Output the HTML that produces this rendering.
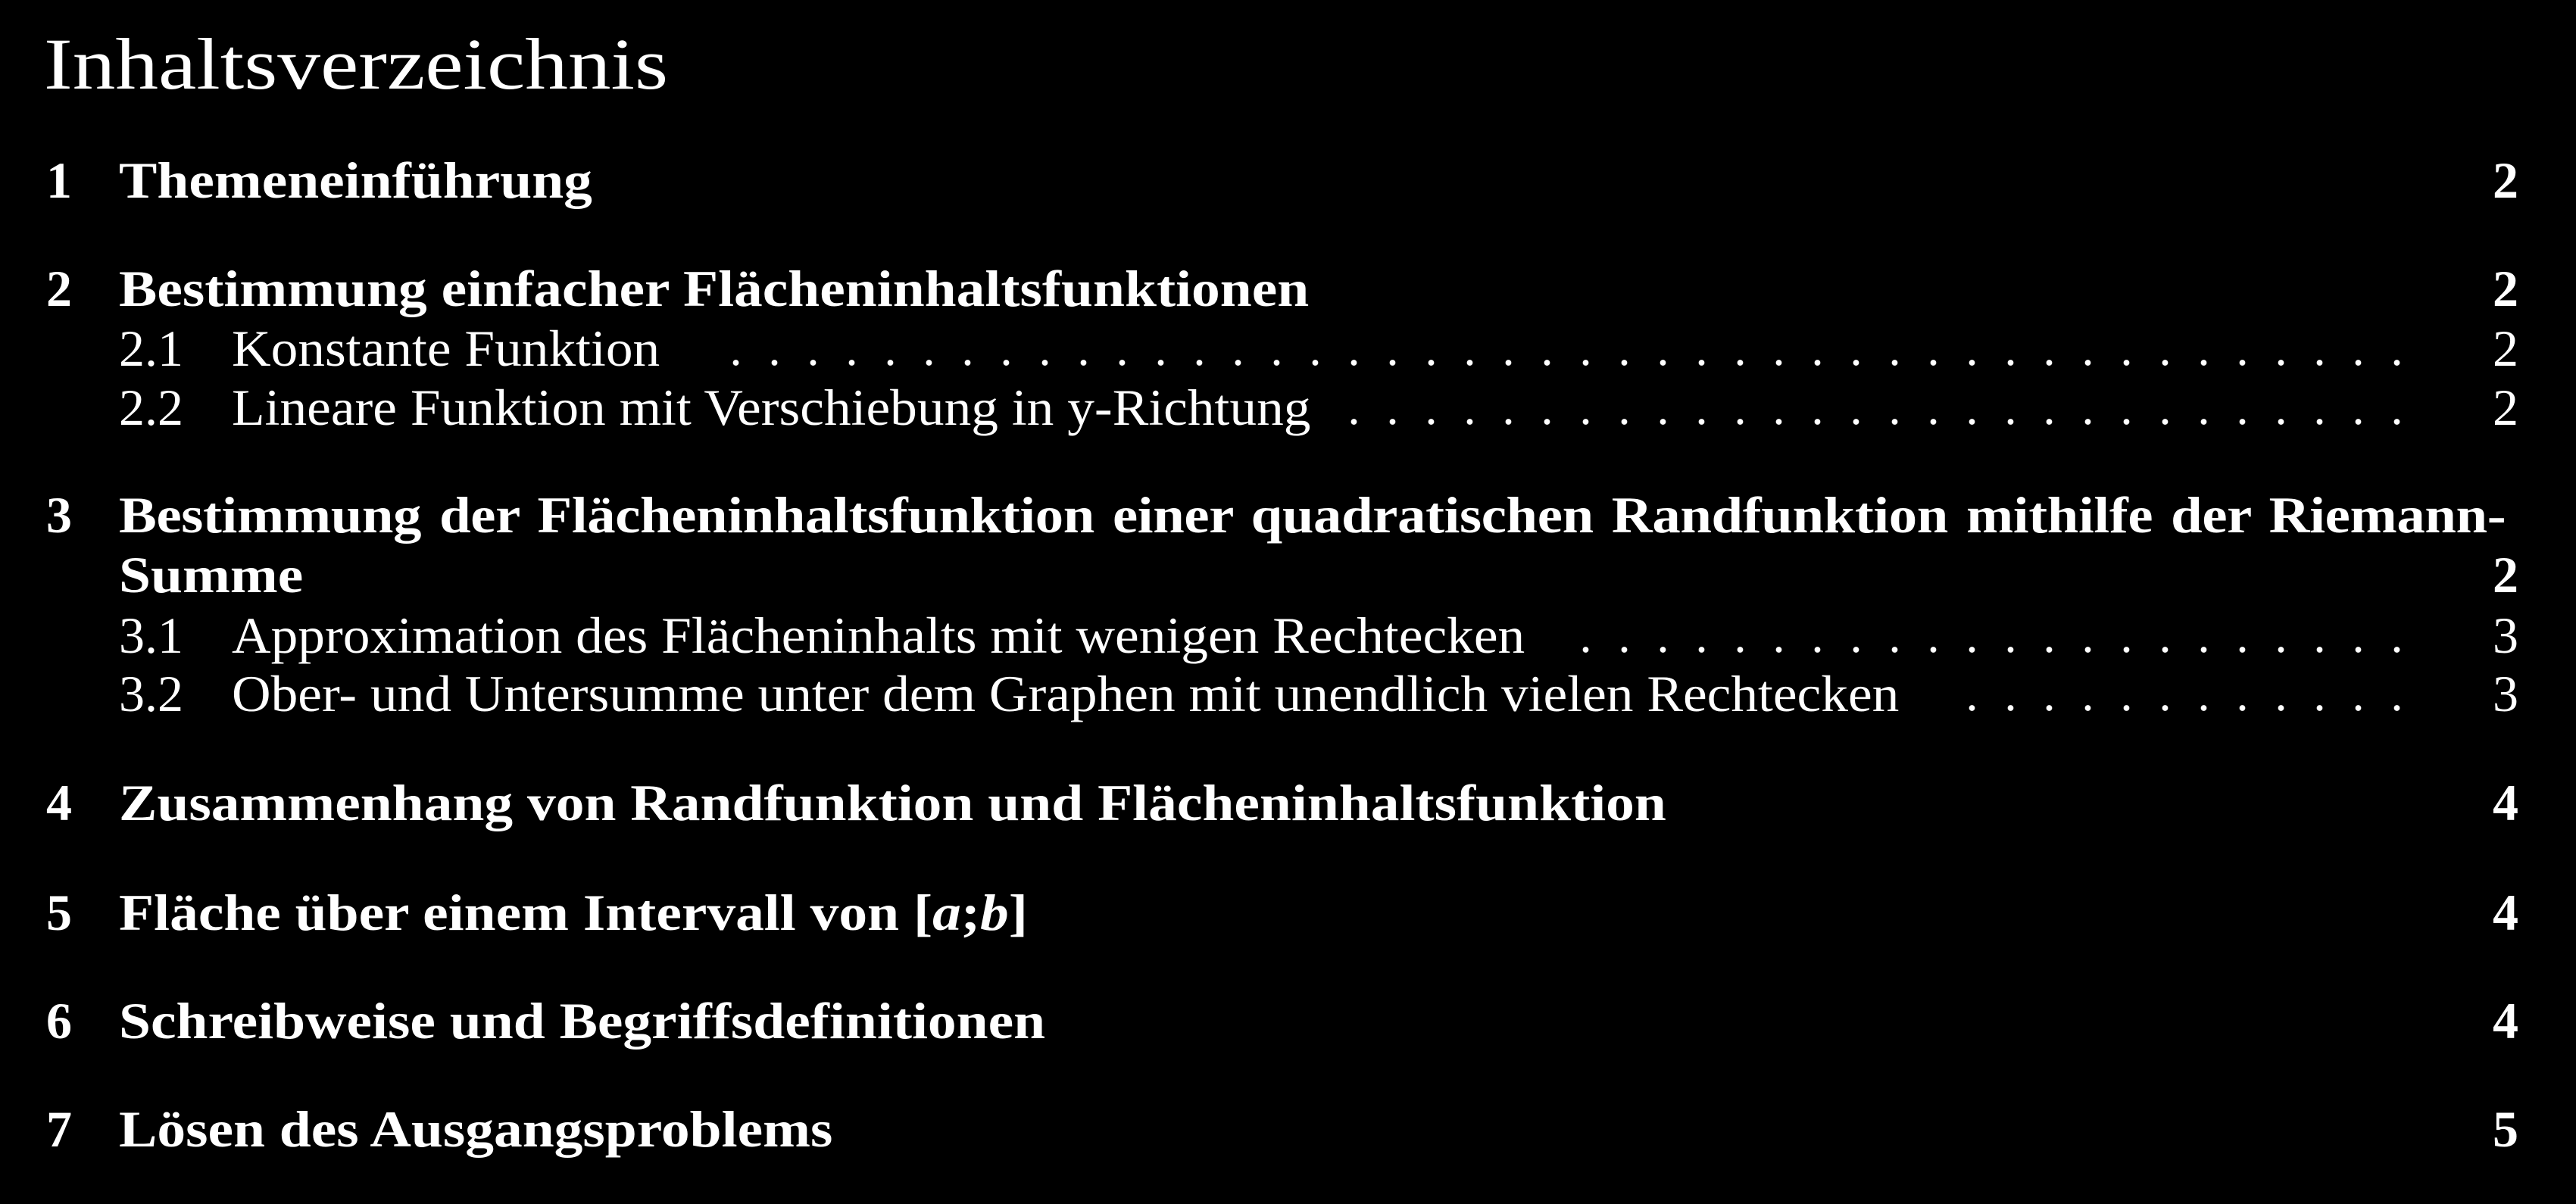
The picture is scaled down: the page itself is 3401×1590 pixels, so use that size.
<!DOCTYPE html>
<html><head><meta charset="utf-8"><style>
html,body{margin:0;padding:0;background:#000;}
body{width:3401px;height:1590px;position:relative;overflow:hidden;color:#fff;font-family:"Liberation Serif",serif;}
.t{position:absolute;white-space:nowrap;font-size:68px;line-height:68px;transform-origin:0 0;}
.b{font-weight:bold;transform:scaleX(1.11);}
.r{transform:scaleX(1.05);}
.n{position:absolute;white-space:nowrap;font-size:68px;line-height:68px;text-align:right;width:200px;left:3125px;}
.nb{font-weight:bold;}
.d{position:absolute;height:10px;background-image:radial-gradient(circle,#fff 3.5px,transparent 4.2px);background-size:51px 10px;background-position:right center;background-repeat:repeat-x;}
</style></head><body>
<div class="t" style="font-size:96px;line-height:96px;left:58px;top:37px;transform:scaleX(1.18);">Inhaltsverzeichnis</div>

<div class="t nb" style="left:61px;top:204px;">1</div>
<div class="t b" style="left:157px;top:204px;">Themeneinführung</div>
<div class="n nb" style="top:204px;">2</div>

<div class="t nb" style="left:61px;top:347px;">2</div>
<div class="t b" style="left:157px;top:347px;">Bestimmung einfacher Flächeninhaltsfunktionen</div>
<div class="n nb" style="top:347px;">2</div>

<div class="t" style="left:157px;top:426px;">2.1</div>
<div class="t r" style="left:306px;top:426px;">Konstante Funktion</div>
<div class="d" style="left:940px;width:2250px;top:474px;"></div>
<div class="n" style="top:426px;">2</div>

<div class="t" style="left:157px;top:504px;">2.2</div>
<div class="t r" style="left:306px;top:504px;">Lineare Funktion mit Verschiebung in y-Richtung</div>
<div class="d" style="left:1755px;width:1435px;top:552px;"></div>
<div class="n" style="top:504px;">2</div>

<div class="t nb" style="left:61px;top:646px;">3</div>
<div class="t b" style="left:157px;top:646px;width:2870px;text-align:justify;text-align-last:justify;transform:scaleX(1.098);letter-spacing:-0.3px;">Bestimmung der Flächeninhaltsfunktion einer quadratischen Randfunktion mithilfe der Riemann-</div>
<div class="t b" style="left:157px;top:725px;">Summe</div>
<div class="n nb" style="top:725px;">2</div>

<div class="t" style="left:157px;top:805px;">3.1</div>
<div class="t r" style="left:306px;top:805px;">Approximation des Flächeninhalts mit wenigen Rechtecken</div>
<div class="d" style="left:2070px;width:1120px;top:853px;"></div>
<div class="n" style="top:805px;">3</div>

<div class="t" style="left:157px;top:882px;">3.2</div>
<div class="t r" style="left:306px;top:882px;">Ober- und Untersumme unter dem Graphen mit unendlich vielen Rechtecken</div>
<div class="d" style="left:2565px;width:625px;top:930px;"></div>
<div class="n" style="top:882px;">3</div>

<div class="t nb" style="left:61px;top:1026px;">4</div>
<div class="t b" style="left:157px;top:1026px;">Zusammenhang von Randfunktion und Flächeninhaltsfunktion</div>
<div class="n nb" style="top:1026px;">4</div>

<div class="t nb" style="left:61px;top:1171px;">5</div>
<div class="t b" style="left:157px;top:1171px;">Fläche über einem Intervall von [<i>a</i>;<i>b</i>]</div>
<div class="n nb" style="top:1171px;">4</div>

<div class="t nb" style="left:61px;top:1314px;">6</div>
<div class="t b" style="left:157px;top:1314px;">Schreibweise und Begriffsdefinitionen</div>
<div class="n nb" style="top:1314px;">4</div>

<div class="t nb" style="left:61px;top:1457px;">7</div>
<div class="t b" style="left:157px;top:1457px;">Lösen des Ausgangsproblems</div>
<div class="n nb" style="top:1457px;">5</div>
</body></html>
